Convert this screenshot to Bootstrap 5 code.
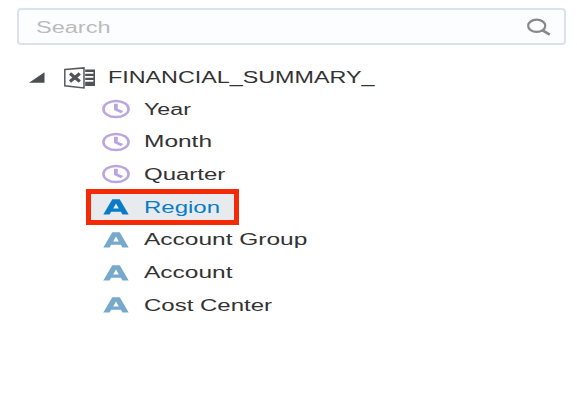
<!DOCTYPE html>
<html lang="en">
<head>
<meta charset="utf-8">
<meta name="viewport" content="width=device-width, initial-scale=1">
<title>Financial summary</title>
<link href="https://cdn.jsdelivr.net/npm/bootstrap@5.3.0/dist/css/bootstrap.min.css" rel="stylesheet">
<style>
body{font-family:"Liberation Sans",Arial,sans-serif;font-size:16px;color:#333;overflow:hidden}
.panel{padding:8px 11px 0 17px}
.search-box{height:37px;border:2px solid #d9e4ea;border-radius:4px;background:#fbfdfe;padding:0 12px 0 17px}
.wide{display:inline-block;transform:scaleX(var(--sx,1.5));transform-origin:left center;white-space:nowrap;line-height:1;padding-top:1px}
.search-input{border:0;background:transparent;outline:0;color:#333;width:200px;--sx:1.47;padding:2px 0 0}
.search-input::placeholder{color:#bbb;opacity:1}
.root-row{height:32.7px;padding-left:12px}
.root-name{--sx:1.457;margin-left:5px;padding-top:3px}
.tree{margin-top:15px}
.tree-item{height:32.72px;padding-left:85px}
.tree-icon{width:28px;height:20px;margin-right:14px;flex:none}
.time{color:#b9a6e0}
.attr{color:#76a9cb}
.name-year{--sx:1.45}
.name-month,.name-account,.name-group{--sx:1.53}
.selected{color:#0a7cc7;position:relative}
.selected::before{content:"";position:absolute;left:69px;top:-2px;width:153px;height:36px;border:5px solid #f42a06;background:#e8ebee}
.selected>*{position:relative}
</style>
</head>
<body class="bg-white">
<svg class="d-none">
<symbol id="clock" viewBox="0 0 28 20"><ellipse cx="14" cy="10" rx="12.6" ry="8.1" fill="none" stroke="currentColor" stroke-width="2.5"/><path d="M12 4.8h3.8v4.9l5.4 2.3-2.2 2.3-7-3.3z" fill="currentColor"/></symbol>
<symbol id="attribute" viewBox="0 0 28 20"><path fill-rule="evenodd" d="M1.3 17.6 10.3 2.2h7.4l9 15.4h-6.3l-1.5-2.8H9.1l-1.5 2.8zM11.2 11.4h5.6L14 6.5z" fill="currentColor"/></symbol>
</svg>
<main class="panel">
<div class="search-box d-flex align-items-center justify-content-between">
<input class="search-input wide" type="text" placeholder="Search" aria-label="Search">
<svg width="26" height="18" viewBox="0 0 26 18" fill="none" stroke="#85898c"><ellipse cx="10.7" cy="7.8" rx="8.6" ry="6.1" stroke-width="2.2"/><path d="m16.5 12.3 7.3 4.4" stroke-width="2.7"/></svg>
</div>
<div class="tree">
<div class="root-row d-flex align-items-center">
<svg width="16" height="12" viewBox="0 0 16 12" class="mt-1"><path d="M0 10.7 15.5.3v10.4z" fill="#4b4d4f"/></svg>
<svg width="34" height="22" viewBox="0 0 34 22" class="ms-3 me-2 mt-1"><path d="M3.8 2.6 23 .9v20L3.8 18.8z" fill="#fff" stroke="#58595b" stroke-width="1.5"/><path d="M9 6.5l9.8 8M18.8 6.5 9 14.5" stroke="#505254" stroke-width="3.2" fill="none"/><path d="M24.2 2.5H35V19H24.2zM24.2 5v1.7h8.2V5zm0 4v1.7h8.2V9zm0 4v1.7h8.2V13z" fill="#505254" fill-rule="evenodd"/></svg>
<span class="wide root-name">FINANCIAL_SUMMARY_</span>
</div>
<div class="tree-item d-flex align-items-center"><svg class="tree-icon time"><use href="#clock"/></svg><span class="wide name-year">Year</span></div>
<div class="tree-item d-flex align-items-center"><svg class="tree-icon time"><use href="#clock"/></svg><span class="wide name-month">Month</span></div>
<div class="tree-item d-flex align-items-center"><svg class="tree-icon time"><use href="#clock"/></svg><span class="wide">Quarter</span></div>
<div class="tree-item selected d-flex align-items-center"><svg class="tree-icon"><use href="#attribute"/></svg><span class="wide">Region</span></div>
<div class="tree-item d-flex align-items-center"><svg class="tree-icon attr"><use href="#attribute"/></svg><span class="wide name-group">Account Group</span></div>
<div class="tree-item d-flex align-items-center"><svg class="tree-icon attr"><use href="#attribute"/></svg><span class="wide name-account">Account</span></div>
<div class="tree-item d-flex align-items-center"><svg class="tree-icon attr"><use href="#attribute"/></svg><span class="wide">Cost Center</span></div>
</div>
</main>
<script src="https://cdn.jsdelivr.net/npm/bootstrap@5.3.0/dist/js/bootstrap.bundle.min.js"></script>
</body>
</html>
